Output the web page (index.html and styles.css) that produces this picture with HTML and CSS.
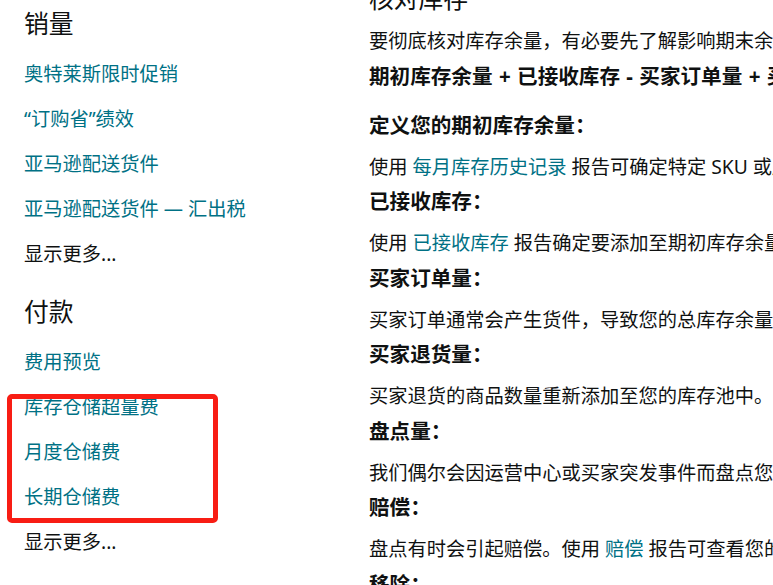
FILE: index.html
```html
<!DOCTYPE html>
<html lang="zh-CN">
<head>
<meta charset="utf-8">
<title>核对库存</title>
<link rel="stylesheet" href="styles.css">
</head>
<body>
<div class="page">
  <nav class="side">
    <h2 class="side-h first">销量</h2>
    <a class="side-link" href="#">奥特莱斯限时促销</a>
    <a class="side-link" href="#">“订购省”绩效</a>
    <a class="side-link" href="#">亚马逊配送货件</a>
    <a class="side-link" href="#">亚马逊配送货件 — 汇出税</a>
    <a class="side-more" href="#">显示更多...</a>

    <h2 class="side-h">付款</h2>
    <a class="side-link" href="#">费用预览</a>
    <div class="highlight">
      <a class="side-link" href="#">库存仓储超量费</a>
      <a class="side-link" href="#">月度仓储费</a>
      <a class="side-link" href="#">长期仓储费</a>
    </div>
    <a class="side-more" href="#">显示更多...</a>
  </nav>

  <main class="content">
    <h1 class="title">核对库存</h1>
    <p class="para">要彻底核对库存余量，有必要先了解影响期末余量的各种因素。</p>
    <p class="formula">期初库存余量 + 已接收库存 - 买家订单量 + 买家退货量 +/- 盘点量 + 赔偿 - 移除 = 期末库存余量</p>

    <h3 class="term">定义您的期初库存余量：</h3>
    <p class="para">使用 <a class="inline-link" href="#">每月库存历史记录</a> 报告可确定特定 SKU 或所有 SKU 在某个月份开始时的库存余量。</p>

    <h3 class="term">已接收库存：</h3>
    <p class="para">使用 <a class="inline-link" href="#">已接收库存</a> 报告确定要添加至期初库存余量的已接收商品数量。</p>

    <h3 class="term">买家订单量：</h3>
    <p class="para">买家订单通常会产生货件，导致您的总库存余量减少。</p>

    <h3 class="term">买家退货量：</h3>
    <p class="para">买家退货的商品数量重新添加至您的库存池中。</p>

    <h3 class="term">盘点量：</h3>
    <p class="para">我们偶尔会因运营中心或买家突发事件而盘点您的库存。</p>

    <h3 class="term">赔偿：</h3>
    <p class="para">盘点有时会引起赔偿。使用 <a class="inline-link" href="#">赔偿</a> 报告可查看您的赔偿详情。</p>

    <h3 class="term">移除：</h3>
  </main>
</div>
</body>
</html>
```

FILE: styles.css
```css
html, body {
  margin: 0;
  padding: 0;
  background: #ffffff;
  overflow: hidden;
}

body {
  font-family: "Noto Sans", "Noto Sans CJK SC", sans-serif;
  color: #0f1111;
  font-size: 19.25px;
}

.page {
  display: flex;
  width: 773px;
  height: 585px;
  overflow: hidden;
}

.side {
  flex: 0 0 369px;
  box-sizing: border-box;
  padding: 8px 0 0 24px;
}

.side-h {
  margin: 28px 0 20px;
  font-size: 24.75px;
  line-height: 32px;
  font-weight: 400;
  color: #0f1111;
}

.side-h.first {
  margin-top: 0;
}

.side-link,
.side-more {
  display: block;
  line-height: 28px;
  margin-bottom: 17px;
  text-decoration: none;
  white-space: nowrap;
}

.side-link {
  color: #007185;
}

.side-more {
  color: #0f1111;
}

.highlight {
  position: relative;
}

.highlight::before {
  content: "";
  position: absolute;
  top: 1px;
  bottom: -12px;
  left: -17px;
  right: 151px;
  border: 5px solid #f81d14;
  border-radius: 5px;
  pointer-events: none;
}

.content {
  flex: 1 1 auto;
  min-width: 0;
  white-space: nowrap;
  overflow: hidden;
}

.title {
  margin: -17px 0 12px;
  font-size: 24.75px;
  line-height: 32px;
  font-weight: 400;
}

.para {
  margin: 0 0 6.5px;
  line-height: 28px;
}

.formula {
  margin: 0 0 21px;
  font-size: 20.6px;
  line-height: 28px;
  font-weight: 700;
  word-spacing: 1px;
}

.term {
  margin: 0 0 14px;
  font-size: 20.6px;
  line-height: 28px;
  font-weight: 700;
}

.inline-link {
  color: #007185;
  text-decoration: none;
}
```
